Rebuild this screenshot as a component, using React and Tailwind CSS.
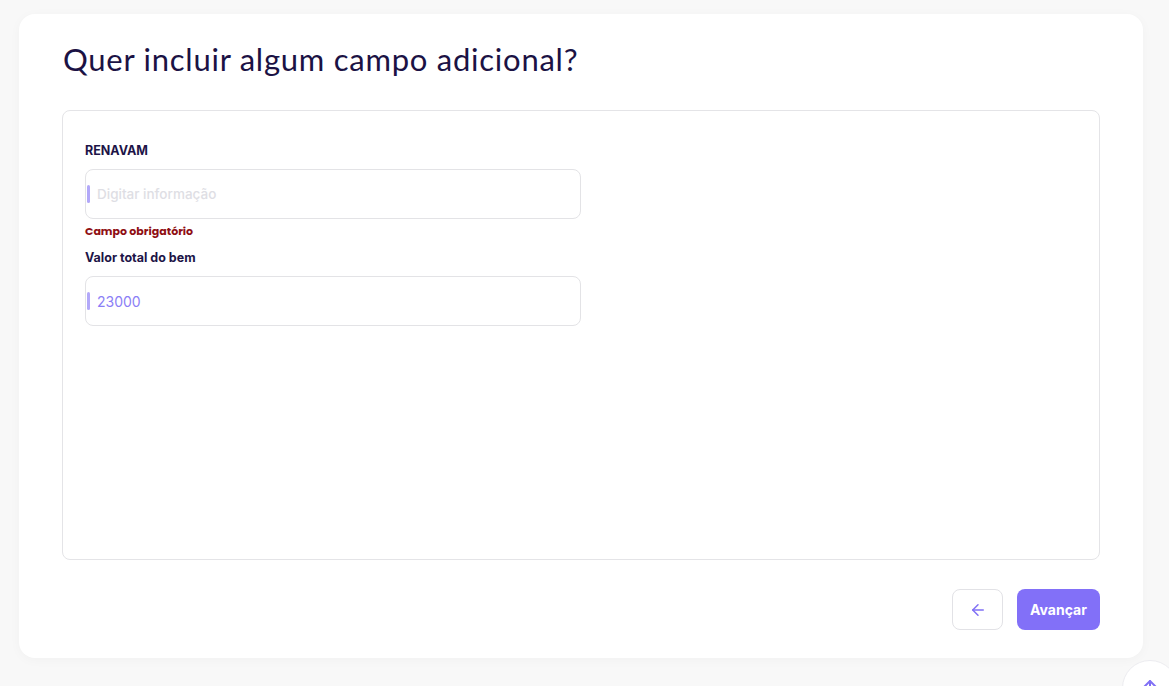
import React from "react";

function Field({ label, placeholder, value, error }) {
  return (
    <div className="flex flex-col">
      <label className="text-[12.5px] leading-[21px] font-bold text-[#1d1447]">{label}</label>
      <div className="mt-[8px] w-[496px] h-[50px] rounded-[8px] border border-[#e3e3e6] bg-white flex items-center pl-[1px]">
        <span className="w-[3px] h-[18px] rounded-full bg-[#b2a8f9]"></span>
        <span
          className={
            "ml-[7px] " +
            (value ? "text-[14px] text-[#8b7ef6]" : "text-[13.5px] font-medium text-[#dedee4]")
          }
        >
          {value || placeholder}
        </span>
      </div>
      {error && (
        <span className="mt-[4px] text-[11px] leading-[16px] font-bold text-[#8f0f14] font-['Poppins','Inter',sans-serif]">
          {error}
        </span>
      )}
    </div>
  );
}

export default function App() {
  return (
    <div className="relative w-[1169px] h-[686px] overflow-hidden bg-[#f8f8f8] font-['Inter',sans-serif]">
      <div className="ml-[19px] mt-[14px] w-[1124px] h-[644px] rounded-[16px] bg-white shadow-[0_2px_12px_rgba(0,0,0,0.03)] px-[43px] pt-[26px] flex flex-col">
        <h1 className="ml-[1px] text-[31px] leading-[38px] text-[#1b1244] font-['Lato',sans-serif] font-normal tracking-[0.75px]">
          Quer incluir algum campo adicional?
        </h1>
        <div className="mt-[32px] h-[450px] w-[1038px] rounded-[8px] border border-[#e4e4e7] pl-[22px] pt-[29px] flex flex-col">
          <Field label="RENAVAM" placeholder="Digitar informação" error="Campo obrigatório" />
          <div className="mt-[8px]">
            <Field label="Valor total do bem" value="23000" />
          </div>
        </div>
        <div className="mt-[29px] w-[1038px] flex justify-end gap-[14px]">
          <button className="w-[51px] h-[41px] rounded-[8px] border border-[#e2e2e6] bg-white flex items-center justify-center">
            <svg width="18" height="18" viewBox="0 0 24 24" fill="none" stroke="#8070f5" strokeWidth="2" strokeLinecap="round" strokeLinejoin="round">
              <path d="M19 12H5" />
              <path d="M12 19l-7-7 7-7" />
            </svg>
          </button>
          <button className="w-[83px] h-[41px] rounded-[8px] bg-[#8270f8] text-white text-[14px] font-bold">
            Avançar
          </button>
        </div>
      </div>
      <div className="absolute left-[1122px] top-[660px] w-[56px] h-[56px] rounded-full bg-white border border-[#ececf0] flex justify-center pt-[15px]">
        <svg width="24" height="24" viewBox="0 0 24 24" fill="none" stroke="#8070f5" strokeWidth="2" strokeLinecap="round" strokeLinejoin="round">
          <path d="M12 19V5" />
          <path d="M5 12l7-7 7 7" />
        </svg>
      </div>
    </div>
  );
}
